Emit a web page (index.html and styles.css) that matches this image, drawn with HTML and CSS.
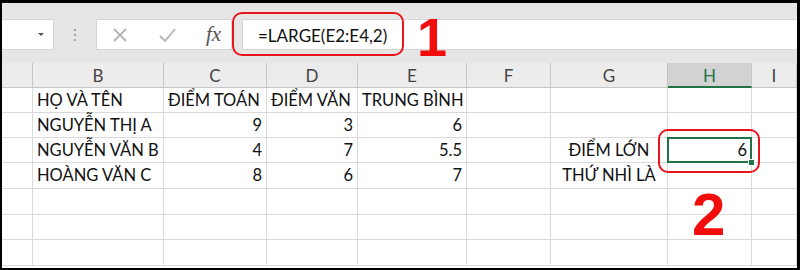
FILE: index.html
```html
<!DOCTYPE html>
<html lang="vi">
<head>
    <meta charset="UTF-8">
    <title>Hàm LARGE trong Excel</title>
    <link rel="stylesheet" href="styles.css">
</head>
<body>
    <div class="window">
        <!-- thanh công thức -->
        <div class="formula-bar">
            <div class="name-box"><span class="arrow"></span></div>
            <div class="grip"><span></span><span></span><span></span></div>
            <div class="fx-box">
                <svg class="ico-x" viewBox="0 0 14 14"><path d="M1 1L13 13M13 1L1 13"/></svg>
                <svg class="ico-check" viewBox="0 0 17 14"><path d="M1 8L6 13L16 1"/></svg>
                <span class="fx">fx</span>
            </div>
            <div class="formula">=LARGE(E2:E4,2)</div>
        </div>

        <!-- bảng tính -->
        <div class="sheet">
            <div class="head"></div>
            <div class="head">B</div>
            <div class="head">C</div>
            <div class="head">D</div>
            <div class="head">E</div>
            <div class="head">F</div>
            <div class="head">G</div>
            <div class="head active">H</div>
            <div class="head">I</div>

            <div class="cell"></div>
            <div class="cell">HỌ VÀ TÊN</div>
            <div class="cell">ĐIỂM TOÁN</div>
            <div class="cell">ĐIỂM VĂN</div>
            <div class="cell">TRUNG BÌNH</div>
            <div class="cell"></div>
            <div class="cell"></div>
            <div class="cell"></div>
            <div class="cell"></div>

            <div class="cell"></div>
            <div class="cell">NGUYỄN THỊ A</div>
            <div class="cell num">9</div>
            <div class="cell num">3</div>
            <div class="cell num">6</div>
            <div class="cell"></div>
            <div class="cell"></div>
            <div class="cell"></div>
            <div class="cell"></div>

            <div class="cell"></div>
            <div class="cell">NGUYỄN VĂN B</div>
            <div class="cell num">4</div>
            <div class="cell num">7</div>
            <div class="cell num">5.5</div>
            <div class="cell"></div>
            <div class="cell center">ĐIỂM LỚN</div>
            <div class="cell num selected">6</div>
            <div class="cell"></div>

            <div class="cell"></div>
            <div class="cell">HOÀNG VĂN C</div>
            <div class="cell num">8</div>
            <div class="cell num">6</div>
            <div class="cell num">7</div>
            <div class="cell"></div>
            <div class="cell center">THỨ NHÌ LÀ</div>
            <div class="cell"></div>
            <div class="cell"></div>

            <div class="cell"></div><div class="cell"></div><div class="cell"></div>
            <div class="cell"></div><div class="cell"></div><div class="cell"></div>
            <div class="cell"></div><div class="cell"></div><div class="cell"></div>

            <div class="cell"></div><div class="cell"></div><div class="cell"></div>
            <div class="cell"></div><div class="cell"></div><div class="cell"></div>
            <div class="cell"></div><div class="cell"></div><div class="cell"></div>

            <div class="cell"></div><div class="cell"></div><div class="cell"></div>
            <div class="cell"></div><div class="cell"></div><div class="cell"></div>
            <div class="cell"></div><div class="cell"></div><div class="cell"></div>
        </div>

        <!-- chú thích đỏ -->
        <div class="mark mark-formula"></div>
        <div class="step step-1">1</div>
        <div class="mark mark-cell"></div>
        <div class="step step-2">2</div>
    </div>
</body>
</html>
```

FILE: styles.css
```css
body {
    margin: 0;
    background-color: #000;
    font-family: Lato, "Liberation Sans", sans-serif;
}
.window {
    position: relative;
    margin: 3px 3px 0 2px;
    height: 265px;
    background-color: #fff;
    overflow: hidden;
}

/* thanh công thức */
.formula-bar {
    display: flex;
    height: 31px;
    padding: 16px 0 13px;
    background-color: #e6e6e6;
}
.name-box {
    width: 52px;
    background-color: #fff;
    border: 1px solid #d6d6d6;
    border-left: none;
    box-sizing: border-box;
    display: flex;
    align-items: center;
    justify-content: flex-end;
    padding-right: 9px;
}
.arrow {
    width: 0;
    height: 0;
    border-left: 3px solid transparent;
    border-right: 3px solid transparent;
    border-top: 3px solid #555;
}
.grip {
    width: 42px;
    display: flex;
    flex-direction: column;
    justify-content: center;
    align-items: center;
    gap: 3px;
}
.grip span {
    width: 2px;
    height: 2px;
    background-color: #a0a0a0;
}
.fx-box {
    width: 136px;
    background-color: #fff;
    border: 1px solid #d6d6d6;
    box-sizing: border-box;
    display: flex;
    align-items: center;
}
.fx-box svg {
    fill: none;
    stroke: #b4b4b4;
    stroke-width: 1.8;
}
.ico-x {
    width: 14px;
    height: 14px;
    margin-left: 16px;
}
.ico-check {
    width: 17px;
    height: 14px;
    margin-left: 32px;
}
.fx {
    margin-left: 30px;
    font-family: "Liberation Serif", serif;
    font-style: italic;
    font-size: 21px;
    color: #555;
}
.formula {
    flex: 1;
    margin-left: 10px;
    background-color: #fff;
    border: 1px solid #d6d6d6;
    border-right: none;
    box-sizing: border-box;
    padding: 3px 0 0 15px;
    font-size: 17px;
    line-height: 26px;
    color: #111;
}

/* bảng tính */
.sheet {
    display: grid;
    grid-template-columns: 31px 131px 103px 91px 109px 84px 117px 84px 1fr;
    grid-template-rows: 25px 25px 25px 25px 26px 26px 25px 26px;
}
.head {
    background-color: #ececec;
    border-right: 1px solid #c6c6c6;
    border-bottom: 1px solid #c6c6c6;
    text-align: center;
    font-size: 17px;
    line-height: 26px;
    color: #444;
}
.head.active {
    background-color: #d2d2d2;
    border-bottom: 2px solid #217346;
    color: #217346;
}
.cell {
    border-right: 1px solid #dadada;
    border-bottom: 1px solid #dadada;
    padding: 0 4px;
    font-size: 16.5px;
    line-height: 25px;
    color: #111;
    white-space: nowrap;
}
.num {
    text-align: right;
}
.center {
    text-align: center;
}
.selected {
    position: relative;
}
.selected::after {
    content: "";
    position: absolute;
    top: -1px;
    left: -1px;
    right: -1px;
    bottom: -1px;
    border: 2px solid #217346;
}
.selected::before {
    content: "";
    position: absolute;
    right: -4px;
    bottom: -4px;
    width: 5px;
    height: 5px;
    background-color: #217346;
    border: 1px solid #fff;
    z-index: 1;
}

/* chú thích */
.mark {
    position: absolute;
    border: 2px solid #e8141b;
    border-radius: 10px;
    box-sizing: border-box;
}
.mark-formula {
    left: 230px;
    top: 9px;
    width: 172px;
    height: 44px;
}
.mark-cell {
    left: 656px;
    top: 126px;
    width: 102px;
    height: 44px;
}
.step {
    position: absolute;
    font-family: "Liberation Sans", sans-serif;
    font-weight: bold;
    color: #f20d0d;
    line-height: 1;
}
.step-1 {
    left: 415px;
    top: 7px;
    font-size: 54px;
}
.step-2 {
    left: 690px;
    top: 182px;
    font-size: 60px;
}
```
